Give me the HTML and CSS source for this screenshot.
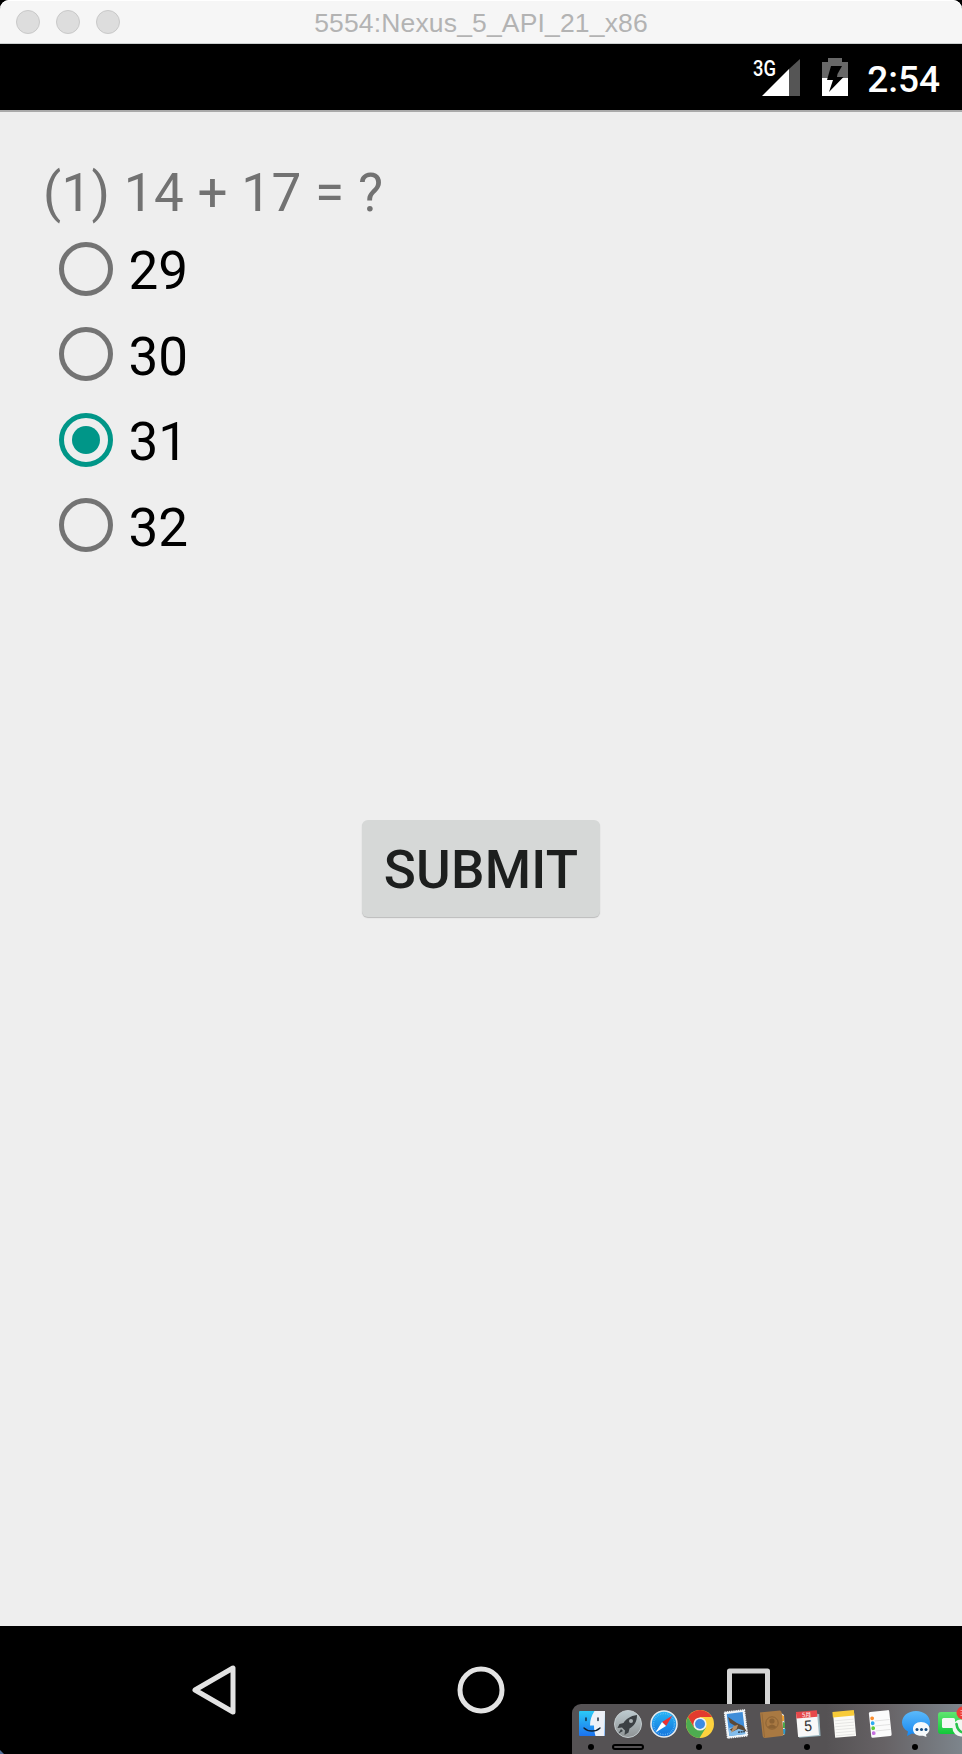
FILE: index.html
```html
<!DOCTYPE html>
<html lang="en">
<head>
<meta charset="utf-8">
<title>5554:Nexus_5_API_21_x86</title>
<link rel="stylesheet" href="styles.css">
</head>
<body>
<div class="window">
  <header class="titlebar">
    <div class="lights"><i class="light"></i><i class="light"></i><i class="light"></i></div>
    <div class="title">5554:Nexus_5_API_21_x86</div>
  </header>
  <div class="statusbar">
    <svg class="signal" width="50" height="40" viewBox="0 0 50 40">
      <text class="network" x="1" y="19.500" textLength="23" lengthAdjust="spacingAndGlyphs">3G</text>
      <path fill="#fff" d="M10 40 37 13V40z"/><path fill="#555" d="M37 13 48 3V40H37z"/>
    </svg>
    <svg class="battery" width="26" height="38" viewBox="0 0 26 38">
      <path fill="#686868" d="M6 0H20V4H26V20H0V4H6z"/><path fill="#fff" d="M0 20H26V38H0z"/>
      <path d="M9 8H20L15.500 16 15 19H21.500L7 34 11 22H5z"/>
    </svg>
    <div class="clock">2:54</div>
  </div>
  <main class="app">
    <div class="question">(1) 14 + 17 = ?</div>
    <div class="options">
      <div class="option"><span class="radio"></span><span class="answer">29</span></div>
      <div class="option"><span class="radio"></span><span class="answer">30</span></div>
      <div class="option"><span class="radio radio-on"></span><span class="answer">31</span></div>
      <div class="option"><span class="radio"></span><span class="answer">32</span></div>
    </div>
    <button class="submit">SUBMIT</button>
  </main>
  <nav class="navbar">
    <svg class="nav-icon" viewBox="0 0 60 60"><path d="M11 30 49 8V52z"/></svg>
    <svg class="nav-icon" viewBox="0 0 60 60"><circle cx="30" cy="30" r="21"/></svg>
    <svg class="nav-icon" viewBox="0 0 60 60"><path stroke="#d4d4d4" d="M11.500 11H49.500V49H11.500z"/></svg>
  </nav>
  <i class="desktop-corner"></i>
</div>

<div class="dock">
  <div class="dock-item">
    <svg viewBox="0 0 36 36">
      <defs>
        <linearGradient id="finder" x2="0" y2="1"><stop stop-color="#2bcaf7"/><stop offset="1" stop-color="#1b72ef"/></linearGradient>
        <linearGradient id="silver" x2="0" y2="1"><stop stop-color="#bdcbd0"/><stop offset="1" stop-color="#8f9395"/></linearGradient>
        <linearGradient id="sea" x2="0" y2="1"><stop stop-color="#25b5f5"/><stop offset="1" stop-color="#1672dc"/></linearGradient>
        <linearGradient id="bubble" x2="0" y2="1"><stop stop-color="#5bb9fa"/><stop offset="1" stop-color="#1688f2"/></linearGradient>
        <linearGradient id="green" x2="0" y2="1"><stop stop-color="#5fe570"/><stop offset="1" stop-color="#12c83a"/></linearGradient>
      </defs>
      <rect x="5" y="5" width="26" height="25" rx="1" fill="url(#finder)"/>
      <path fill="#edf1f8" d="M20.500 5C17.500 10 16 14 16 19.500H20C20 23 20.500 27 21.500 30H30.500L31 5z"/>
      <path d="M12 12V14.500M24 12V14.500M10 22C14 26 22 26 26 22" fill="none" stroke="#123" stroke-width="1.400" stroke-linecap="round"/>
    </svg><i class="running"></i>
  </div>
  <div class="dock-item">
    <svg viewBox="0 0 36 36">
      <circle cx="18" cy="18" r="13.500" fill="url(#silver)" stroke="#c3cbce"/>
      <path fill="#3b4044" d="M27 9C20 10 16 13 13.500 17L9.500 18 7.500 22 12 21.500 15 24.500 14.500 29 18.500 26.500 19.500 22.500C24 20 27 16 27 9zM11 23 8.500 27.500 13 25z"/>
      <circle cx="21" cy="15" r="2" fill="#aab2b5"/>
    </svg><i class="bounce"></i>
  </div>
  <div class="dock-item">
    <svg viewBox="0 0 36 36">
      <circle cx="18" cy="18" r="13" fill="url(#sea)" stroke="#e3e9ed" stroke-width="1.600"/>
      <circle cx="18" cy="18" r="10.500" fill="none" stroke="#71c5fa" stroke-width="1.500" stroke-dasharray=".6 1.200"/>
      <path fill="#ec3131" d="M26.500 9.500 20 20 16 16z"/><path fill="#fff" d="M9.500 26.500 16 16 20 20z"/>
    </svg>
  </div>
  <div class="dock-item">
    <svg viewBox="0 0 36 36">
      <circle cx="18" cy="18" r="14" fill="#fdd23e"/>
      <path fill="#e33b2e" d="M5.900 11A14 14 0 0 1 30.100 11H18L12 21.500z"/>
      <path fill="#4dac50" d="M5.900 11A14 14 0 0 0 17.500 32L24 21.500 12 21.500z"/>
      <circle cx="18" cy="18" r="6.600" fill="#f1f1f1"/><circle cx="18" cy="18" r="5" fill="#3c8be2"/>
    </svg><i class="running"></i>
  </div>
  <div class="dock-item">
    <svg viewBox="0 0 36 36"><g transform="rotate(-7 18 18)">
      <path fill="#f1f5f8" stroke="#f1f5f8" stroke-width="1.500" stroke-dasharray="1.500 .7" d="M8 5H28V31H8z"/>
      <path fill="#3f8dd8" d="M10 7H26V29H10z"/><path fill="#83bdec" d="M10 21H26V29H10z"/>
      <path fill="#5b4938" d="M11 10 19 17 25 21 28 27 20 23 14 25 11 23 17 20 12 16z"/>
      <path fill="#b69068" d="M15 20 20 19 18 23 12 26z"/><path d="M19 26.500H26" stroke="#345" stroke-width="1.500" stroke-dasharray="2 .6"/>
    </g></svg>
  </div>
  <div class="dock-item">
    <svg viewBox="0 0 36 36">
      <path fill="#e8e8e5" d="M25 5.500 30 9 31 28 27 30z"/><path fill="#f2a333" d="M28 9 30 10V15H28z"/><path fill="#48a94c" d="M29 16 31 17V22H29z"/><path fill="#299cd2" d="M29 23 31.500 23 31 28H29z"/>
      <path fill="#a97942" d="M6 6.500 26 4.500Q27.500 5 27.800 7L29.500 28Q29.500 30 27.500 30L11 32Q9 32 8.700 30z"/>
      <path d="M8 7.500 10.500 31" stroke="#966a38"/>
      <circle cx="18" cy="17" r="6.200" fill="none" stroke="#8b6234"/>
      <circle cx="18" cy="15" r="2.600" fill="#8b6234"/><path fill="#8b6234" d="M13.500 21Q18 16 22.500 21 18 24 13.500 21z"/>
    </svg>
  </div>
  <div class="dock-item">
    <svg viewBox="0 0 36 36"><g transform="rotate(-5 18 18)">
      <path fill="#9cb9c2" d="M9 9H30L29.500 31H8z"/><path fill="#f8f8f8" d="M7 7H28V30H7z"/><path fill="#e7494b" d="M7 5H28V11.500H7z"/>
      <text class="cal-month" x="17.500" y="10.700">5月</text><text class="cal-day" x="17.500" y="25">5</text>
    </g></svg><i class="running"></i>
  </div>
  <div class="dock-item">
    <svg viewBox="0 0 36 36"><g transform="rotate(-5 18 18)">
      <path fill="#fafaf7" d="M8 6H29V31H8z"/><path fill="#f8cb38" d="M7.500 5H29V10.500H7.500z"/>
      <path d="M9 14H28M9 17H28M9 20H28M9 23H28M9 26H28M9 29H28" stroke="#dededc" stroke-width=".7"/>
    </g></svg>
  </div>
  <div class="dock-item">
    <svg viewBox="0 0 36 36"><g transform="rotate(-6 18 18)">
      <rect x="8" y="5" width="20.500" height="26" rx="1.500" fill="#fbfbfb"/>
      <path d="M13 14.500H28M13 19.500H28M13 24.500H28" stroke="#dedede" stroke-width=".8"/>
      <circle cx="10.800" cy="11.500" r="1.900" fill="#fa8d2e"/><circle cx="10.800" cy="16.500" r="1.900" fill="#2faaf0"/><circle cx="10.800" cy="21.500" r="1.900" fill="#60cc39"/><circle cx="10.800" cy="26.500" r="1.900" fill="#c76fe1"/>
    </g></svg>
  </div>
  <div class="dock-item">
    <svg viewBox="0 0 36 36">
      <path fill="url(#bubble)" d="M18 5C26 5 32 10 32 16.500S26 28 18 28L14 27.500 9 30 10 25.500C6 23.500 4 20 4 16.500 4 10 10 5 18 5z"/>
      <path fill="#f6fafc" d="M23 16C28 16 31.500 19 31.500 23 31.500 25.500 30 27.500 28 28.500L28.500 31 25 29.700C19 30.500 15 27.500 15 23 15 19 18 16 23 16z"/>
      <circle cx="19" cy="23.500" r="1.500" fill="#174d82"/><circle cx="23.500" cy="23.500" r="1.500" fill="#174d82"/><circle cx="28" cy="23.500" r="1.500" fill="#174d82"/>
    </svg><i class="running"></i>
  </div>
  <div class="dock-item">
    <svg viewBox="0 0 36 36">
      <rect x="4" y="6" width="30" height="22" rx="3" fill="url(#green)"/>
      <rect x="8" y="12" width="13" height="10" rx="1.500" fill="#f4f7f4"/>
      <circle cx="27" cy="22" r="8.500" fill="#f2f7f2"/>
      <path d="M22.500 18C23 23 26 26 29 26.500" fill="none" stroke="#29c34c" stroke-width="2.600" stroke-linecap="round"/>
      <circle cx="29" cy="7" r="6.500" fill="#ee3d37"/>
      <path d="M26.500 4.500H28M26.500 7H28M26.500 9.500H28" stroke="#f7a5a0" stroke-width="1"/>
    </svg>
  </div>
</div>
</body>
</html>
```
FILE: styles.css
```css
* { box-sizing: border-box; }
body { margin: 0; background: #000; font-family: Roboto, sans-serif; }
.window { position: relative; width: 962px; height: 1754px; display: flex; flex-direction: column; overflow: hidden; background: #000; }
.titlebar { height: 44px; display: grid; grid-template-columns: 160px 1fr 160px; align-items: center; background: #f6f6f6; border-bottom: 1px solid #ccd0d0; border-radius: 9px 9px 0 0; box-shadow: inset 0 1px #fff; }
.lights { display: flex; gap: 16px; padding-left: 16px; }
.light { width: 24px; height: 24px; border: 1px solid #c9c9c9; border-radius: 50%; background: #dddddd; }
.title { font: 26.500px/42px "Liberation Sans", Arial, sans-serif; letter-spacing: .16px; color: #b3b3b3; text-align: center; white-space: nowrap; padding-top: 2px; }
.statusbar { height: 66px; display: flex; justify-content: flex-end; align-items: flex-start; padding: 0 22px 0 0; background: #000; }
.signal { margin: 12px 20px 0 0; }
.network { font: 500 22px Roboto, sans-serif; fill: #fff; }
.battery { margin: 14px 19px 0 0; }
.clock { font-size: 37px; line-height: 44px; font-weight: 500; color: #fff; padding-top: 14px; }
.app { height: 1516px; display: flex; flex-direction: column; background: #eee; border-top: 2px solid #a9a9a9; padding: 50px 44px 0 43px; }
.question { font-size: 53px; line-height: 62px; height: 64px; letter-spacing: .32px; color: #727272; white-space: pre; }
.options { display: flex; flex-direction: column; padding-left: 15.500px; }
.option { height: 85.500px; display: flex; align-items: center; gap: 16px; }
.radio { width: 54px; height: 54px; border: 5px solid #737373; border-radius: 50%; display: grid; place-items: center; }
.radio-on { border-color: #009688; }
.radio-on::after { content: ""; width: 28px; height: 28px; border-radius: 50%; background: #009688; }
.answer { font-size: 53px; line-height: 62px; color: #000; padding-top: 5px; }
.submit { align-self: center; width: 238px; height: 97px; margin-top: 252px; padding: 3px 0 0 1px; border: 0; border-radius: 6px; background: #d6d8d7; box-shadow: 0 1px 1px #bbb; color: #1d1f1e; font: 500 53px/62px Roboto, sans-serif; letter-spacing: .25px; }
.navbar { flex: 1; display: flex; justify-content: center; gap: 207px; padding-top: 34px; background: #000; }
.nav-icon { width: 60px; height: 60px; fill: none; stroke: #e3e3e3; stroke-width: 5; stroke-linejoin: round; }
.desktop-corner { position: absolute; left: 0; bottom: 0; width: 4px; height: 4px; background: #526d96; clip-path: polygon(0 0, 100% 100%, 0 100%); }
.dock { position: absolute; left: 572px; top: 1704px; width: 390px; height: 50px; overflow: hidden; display: flex; padding: 2px 0 0 2px; border-radius: 9px 0 0 0; background: linear-gradient(90deg, #555254 0 65%, #666265 80%, #7d858c 100%); }
.dock-item { flex: 0 0 36px; display: flex; flex-direction: column; align-items: center; }
.dock-item svg { width: 36px; height: 36px; flex: none; }
.running { width: 6px; height: 6px; margin: 2px 2px 0 0; border-radius: 50%; background: #000; }
.bounce { width: 32px; height: 6px; margin-top: 2px; border: 2px solid #000; border-radius: 4px; }
.cal-month { font: 6px "Noto Sans CJK JP", sans-serif; fill: #fff; text-anchor: middle; }
.cal-day { font: 15px Roboto, sans-serif; fill: #333; text-anchor: middle; }
```
